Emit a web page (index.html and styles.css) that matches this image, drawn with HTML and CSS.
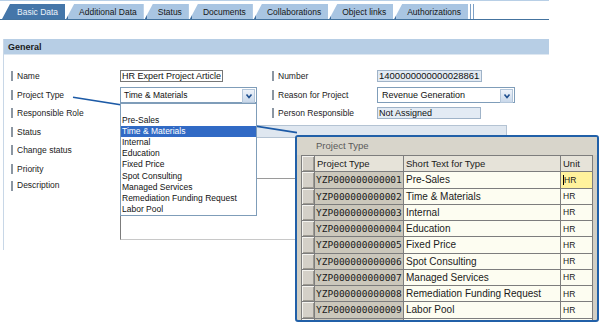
FILE: index.html
```html
<!DOCTYPE html>
<html lang="en">
  <head>
    <meta charset="UTF-8" />
    <meta name="viewport" content="width=device-width, initial-scale=1.0" />
    <title>Project - Basic Data</title>
    <link rel="stylesheet" href="styles.css">
  </head>
  <body>
    <div class="page">
      <nav class="tabs">
        <span class="tab active">Basic Data</span>
        <span class="tab">Additional Data</span>
        <span class="tab">Status</span>
        <span class="tab">Documents</span>
        <span class="tab">Collaborations</span>
        <span class="tab">Object links</span>
        <span class="tab">Authorizations</span>
        <span class="tab-end"></span>
      </nav>

      <section class="panel">
        <h2 class="panel-title">General</h2>
        <div class="form">
          <label class="field-label left">Name</label>
          <input class="text-input name-input" value="HR Expert Project Article" />
          <label class="field-label right">Number</label>
          <input class="text-input readonly number-input" value="14000000000000288612" readonly />

          <label class="field-label left">Project Type</label>
          <div class="select-wrap">
            <div class="select type-select">
              Time &amp; Materials
              <span class="select-btn">
                <svg width="10" height="12" viewBox="0 0 10 12"><polyline points="2.5,4.5 5,7.5 7.5,4.5" fill="none" stroke="#1f4f8f" stroke-width="1.6" /></svg>
              </span>
            </div>
            <ul class="dropdown">
              <li></li>
              <li>Pre-Sales</li>
              <li class="selected">Time &amp; Materials</li>
              <li>Internal</li>
              <li>Education</li>
              <li>Fixed Price</li>
              <li>Spot Consulting</li>
              <li>Managed Services</li>
              <li>Remediation Funding Request</li>
              <li>Labor Pool</li>
            </ul>
          </div>
          <label class="field-label right">Reason for Project</label>
          <div class="select reason-select">
            Revenue Generation
            <span class="select-btn">
              <svg width="10" height="12" viewBox="0 0 10 12"><polyline points="2.5,4.5 5,7.5 7.5,4.5" fill="none" stroke="#1f4f8f" stroke-width="1.6" /></svg>
            </span>
          </div>

          <label class="field-label left">Responsible Role</label>
          <label class="field-label right">Person Responsible</label>
          <input class="text-input readonly person-input" value="Not Assigned" readonly />

          <label class="field-label left">Status</label>
          <div class="status-box"></div>

          <label class="field-label left">Change status</label>
          <label class="field-label left">Priority</label>

          <label class="field-label left top">Description</label>
          <textarea class="description"></textarea>
        </div>
      </section>

      <!-- callout from the field to the value help -->
      <svg class="connector" width="600" height="324">
        <line x1="73" y1="97.3" x2="297" y2="132.6" stroke="#1c5aa6" stroke-width="1.6" />
      </svg>

      <div class="popup">
        <div class="popup-title">Project Type</div>
        <table class="help-table">
          <colgroup>
            <col class="c-sel" />
            <col class="c-code" />
            <col class="c-text" />
            <col class="c-unit" />
          </colgroup>
          <tr class="head">
            <td class="sel"></td>
            <th>Project Type</th>
            <th>Short Text for Type</th>
            <th>Unit</th>
          </tr>
          <tr>
            <td class="sel"></td>
            <td class="code">YZP000000000001</td>
            <td class="text">Pre-Sales</td>
            <td class="unit current"><span class="cursor"></span>HR</td>
          </tr>
          <tr>
            <td class="sel"></td>
            <td class="code">YZP000000000002</td>
            <td class="text">Time &amp; Materials</td>
            <td class="unit">HR</td>
          </tr>
          <tr>
            <td class="sel"></td>
            <td class="code">YZP000000000003</td>
            <td class="text">Internal</td>
            <td class="unit">HR</td>
          </tr>
          <tr>
            <td class="sel"></td>
            <td class="code">YZP000000000004</td>
            <td class="text">Education</td>
            <td class="unit">HR</td>
          </tr>
          <tr>
            <td class="sel"></td>
            <td class="code">YZP000000000005</td>
            <td class="text">Fixed Price</td>
            <td class="unit">HR</td>
          </tr>
          <tr>
            <td class="sel"></td>
            <td class="code">YZP000000000006</td>
            <td class="text">Spot Consulting</td>
            <td class="unit">HR</td>
          </tr>
          <tr>
            <td class="sel"></td>
            <td class="code">YZP000000000007</td>
            <td class="text">Managed Services</td>
            <td class="unit">HR</td>
          </tr>
          <tr>
            <td class="sel"></td>
            <td class="code">YZP000000000008</td>
            <td class="text">Remediation Funding Request</td>
            <td class="unit">HR</td>
          </tr>
          <tr>
            <td class="sel"></td>
            <td class="code">YZP000000000009</td>
            <td class="text">Labor Pool</td>
            <td class="unit">HR</td>
          </tr>
          <tr>
            <td class="sel"></td>
            <td class="code"></td>
            <td class="text"></td>
            <td class="unit"></td>
          </tr>
        </table>
      </div>
    </div>
  </body>
</html>
```

FILE: styles.css
```css
body {
  margin: 0;
  font-family: "Liberation Sans", Arial, sans-serif;
  font-size: 8.5px;
  color: #1e1e1e;
  background: #fff;
}

.page {
  position: relative;
  width: 600px;
  height: 324px;
  overflow: hidden;
}

/* tab strip */
.tabs {
  display: flex;
  width: 547px;
  height: 15px;
  padding: 3px 0 0 2px;
  border-top: 1px solid #b8cfe6;
  border-bottom: 1px solid #44739f;
}

.tab {
  display: flex;
  align-items: center;
  padding: 0 7px 0 13px;
  margin-right: 1px;
  white-space: nowrap;
  color: #151515;
  background: linear-gradient(to right, #3d6c9e 0 2px, #a9c5e2 2px);
  clip-path: polygon(8px 0, 100% 0, 100% 100%, 0 100%);
}

.tab.active {
  padding-left: 15px;
  background: #4576a9;
  color: #eef3f9;
}

.tab-end {
  width: 2px;
  height: 15px;
  margin-left: 1px;
  border-left: 1px solid #7da0c6;
  border-right: 1px solid #7da0c6;
}

/* general panel */
.panel {
  width: 545px;
  margin: 19px 0 0 3px;
  border-left: 1px solid #c8d7e7;
}

.panel-title {
  margin: 0;
  height: 16px;
  line-height: 16px;
  padding-left: 4px;
  font-size: 9px;
  font-weight: bold;
  color: #1a1a1a;
  background: #b7cee5;
  border-bottom: 1px solid #dde7f1;
  box-sizing: border-box;
}

.form {
  display: grid;
  grid-template-columns: 109px 152px 105px 1fr;
  grid-template-rows: 19px 19px 18px 19px 18px 19px 62px;
  align-items: center;
  padding: 11px 0 10px 7px;
}

.field-label {
  display: flex;
  align-items: center;
  white-space: nowrap;
  color: #222;
}

.field-label::before {
  content: "";
  width: 2px;
  height: 10px;
  margin-right: 4px;
  background: #8b96a2;
}

.field-label.left {
  grid-column: 1;
}

.field-label.right {
  grid-column: 3;
}

.field-label.top {
  align-self: start;
  line-height: 15px;
}

.text-input {
  box-sizing: border-box;
  height: 12px;
  padding: 0 1px;
  font: inherit;
  font-size: 9px;
  color: #111;
  border: 1px solid #777;
  background: #fff;
  outline: none;
}

.text-input.readonly {
  border-color: #9fb3c8;
  background: #e3ebf4;
}

.name-input {
  width: 103px;
}

.number-input {
  width: 105px;
  font-size: 9.5px;
}

.person-input {
  grid-column: 4;
  width: 104px;
}

.select-wrap {
  position: relative;
  height: 16px;
}

.select {
  position: relative;
  box-sizing: border-box;
  height: 16px;
  line-height: 14px;
  padding-left: 3px;
  border: 1px solid #7f9db9;
  background: #fff;
  color: #111;
}

.type-select {
  width: 137px;
}

.reason-select {
  width: 138px;
  padding-left: 4px;
  font-size: 9px;
}

.select-btn {
  position: absolute;
  top: 1px;
  right: 1px;
  width: 11px;
  height: 12px;
  display: flex;
  align-items: center;
  justify-content: center;
  border: 1px solid #b3c6da;
  background: linear-gradient(#eef3fa, #c9d8ea);
}

.dropdown {
  position: absolute;
  top: 16px;
  left: 0;
  z-index: 3;
  width: 137px;
  box-sizing: border-box;
  margin: 0;
  padding: 0;
  list-style: none;
  background: #fff;
  border: 1px solid #7f9db9;
}

.dropdown li {
  height: 11.2px;
  line-height: 11.2px;
  padding-left: 1px;
  color: #111;
  white-space: nowrap;
}

.dropdown li.selected {
  background: #316ac5;
  color: #fff;
}

.status-box {
  grid-column: 2 / 5;
  width: 387px;
  height: 13px;
  box-sizing: border-box;
  border: 1px solid #b4c3d3;
  background: #dfe7f0;
}

.description {
  grid-column: 2 / 5;
  align-self: start;
  width: 390px;
  height: 62px;
  box-sizing: border-box;
  margin: 0;
  resize: none;
  border: 1px solid #c8c8c8;
  border-left-color: #7c7c7c;
  border-top-color: #9a9a9a;
  background: #fff;
}

.connector {
  position: absolute;
  top: 0;
  left: 0;
  z-index: 2;
  pointer-events: none;
}

/* value help window */
.popup {
  position: absolute;
  left: 295px;
  top: 135px;
  z-index: 4;
  width: 304px;
  height: 187px;
  box-sizing: border-box;
  overflow: hidden;
  border: 2px solid #2160a8;
  border-radius: 3px;
  background: #d2cfc4;
}

.popup-title {
  height: 18px;
  line-height: 18px;
  padding-left: 19px;
  font-size: 9.5px;
  color: #5a5a5a;
  background: #d8d5cb;
}

.help-table {
  margin-left: 4px;
  width: 291px;
  table-layout: fixed;
  border-collapse: collapse;
}

.c-sel {
  width: 13px;
}

.c-code {
  width: 89px;
}

.c-text {
  width: 157px;
}

.c-unit {
  width: 32px;
}

.help-table tr {
  height: 16.25px;
}

.help-table td,
.help-table th {
  padding: 0 0 0 2px;
  border: 1px solid #7d7d7d;
  white-space: nowrap;
  overflow: hidden;
  font-size: 10px;
  color: #1a1a1a;
}

.help-table th {
  text-align: left;
  font-weight: normal;
  font-size: 9.5px;
  background: #e6e3d9;
}

.help-table td.sel {
  padding: 0;
  background: #d4d0c8;
  box-shadow: inset 1px 1px #f4f3ef, inset -1px -1px #9d9a92;
}

.help-table td.code {
  padding-left: 1px;
  font-family: "DejaVu Sans Mono", "Liberation Mono", monospace;
  font-size: 9.5px;
  background: #cbc7bb;
}

.help-table td.text {
  background: #fdfdf1;
}

.help-table td.unit {
  font-size: 8.5px;
  background: #fdfdf1;
}

.help-table td.unit.current {
  background: #fff29c;
}

.cursor {
  display: inline-block;
  width: 1px;
  height: 10px;
  vertical-align: middle;
  background: #000;
}
```
